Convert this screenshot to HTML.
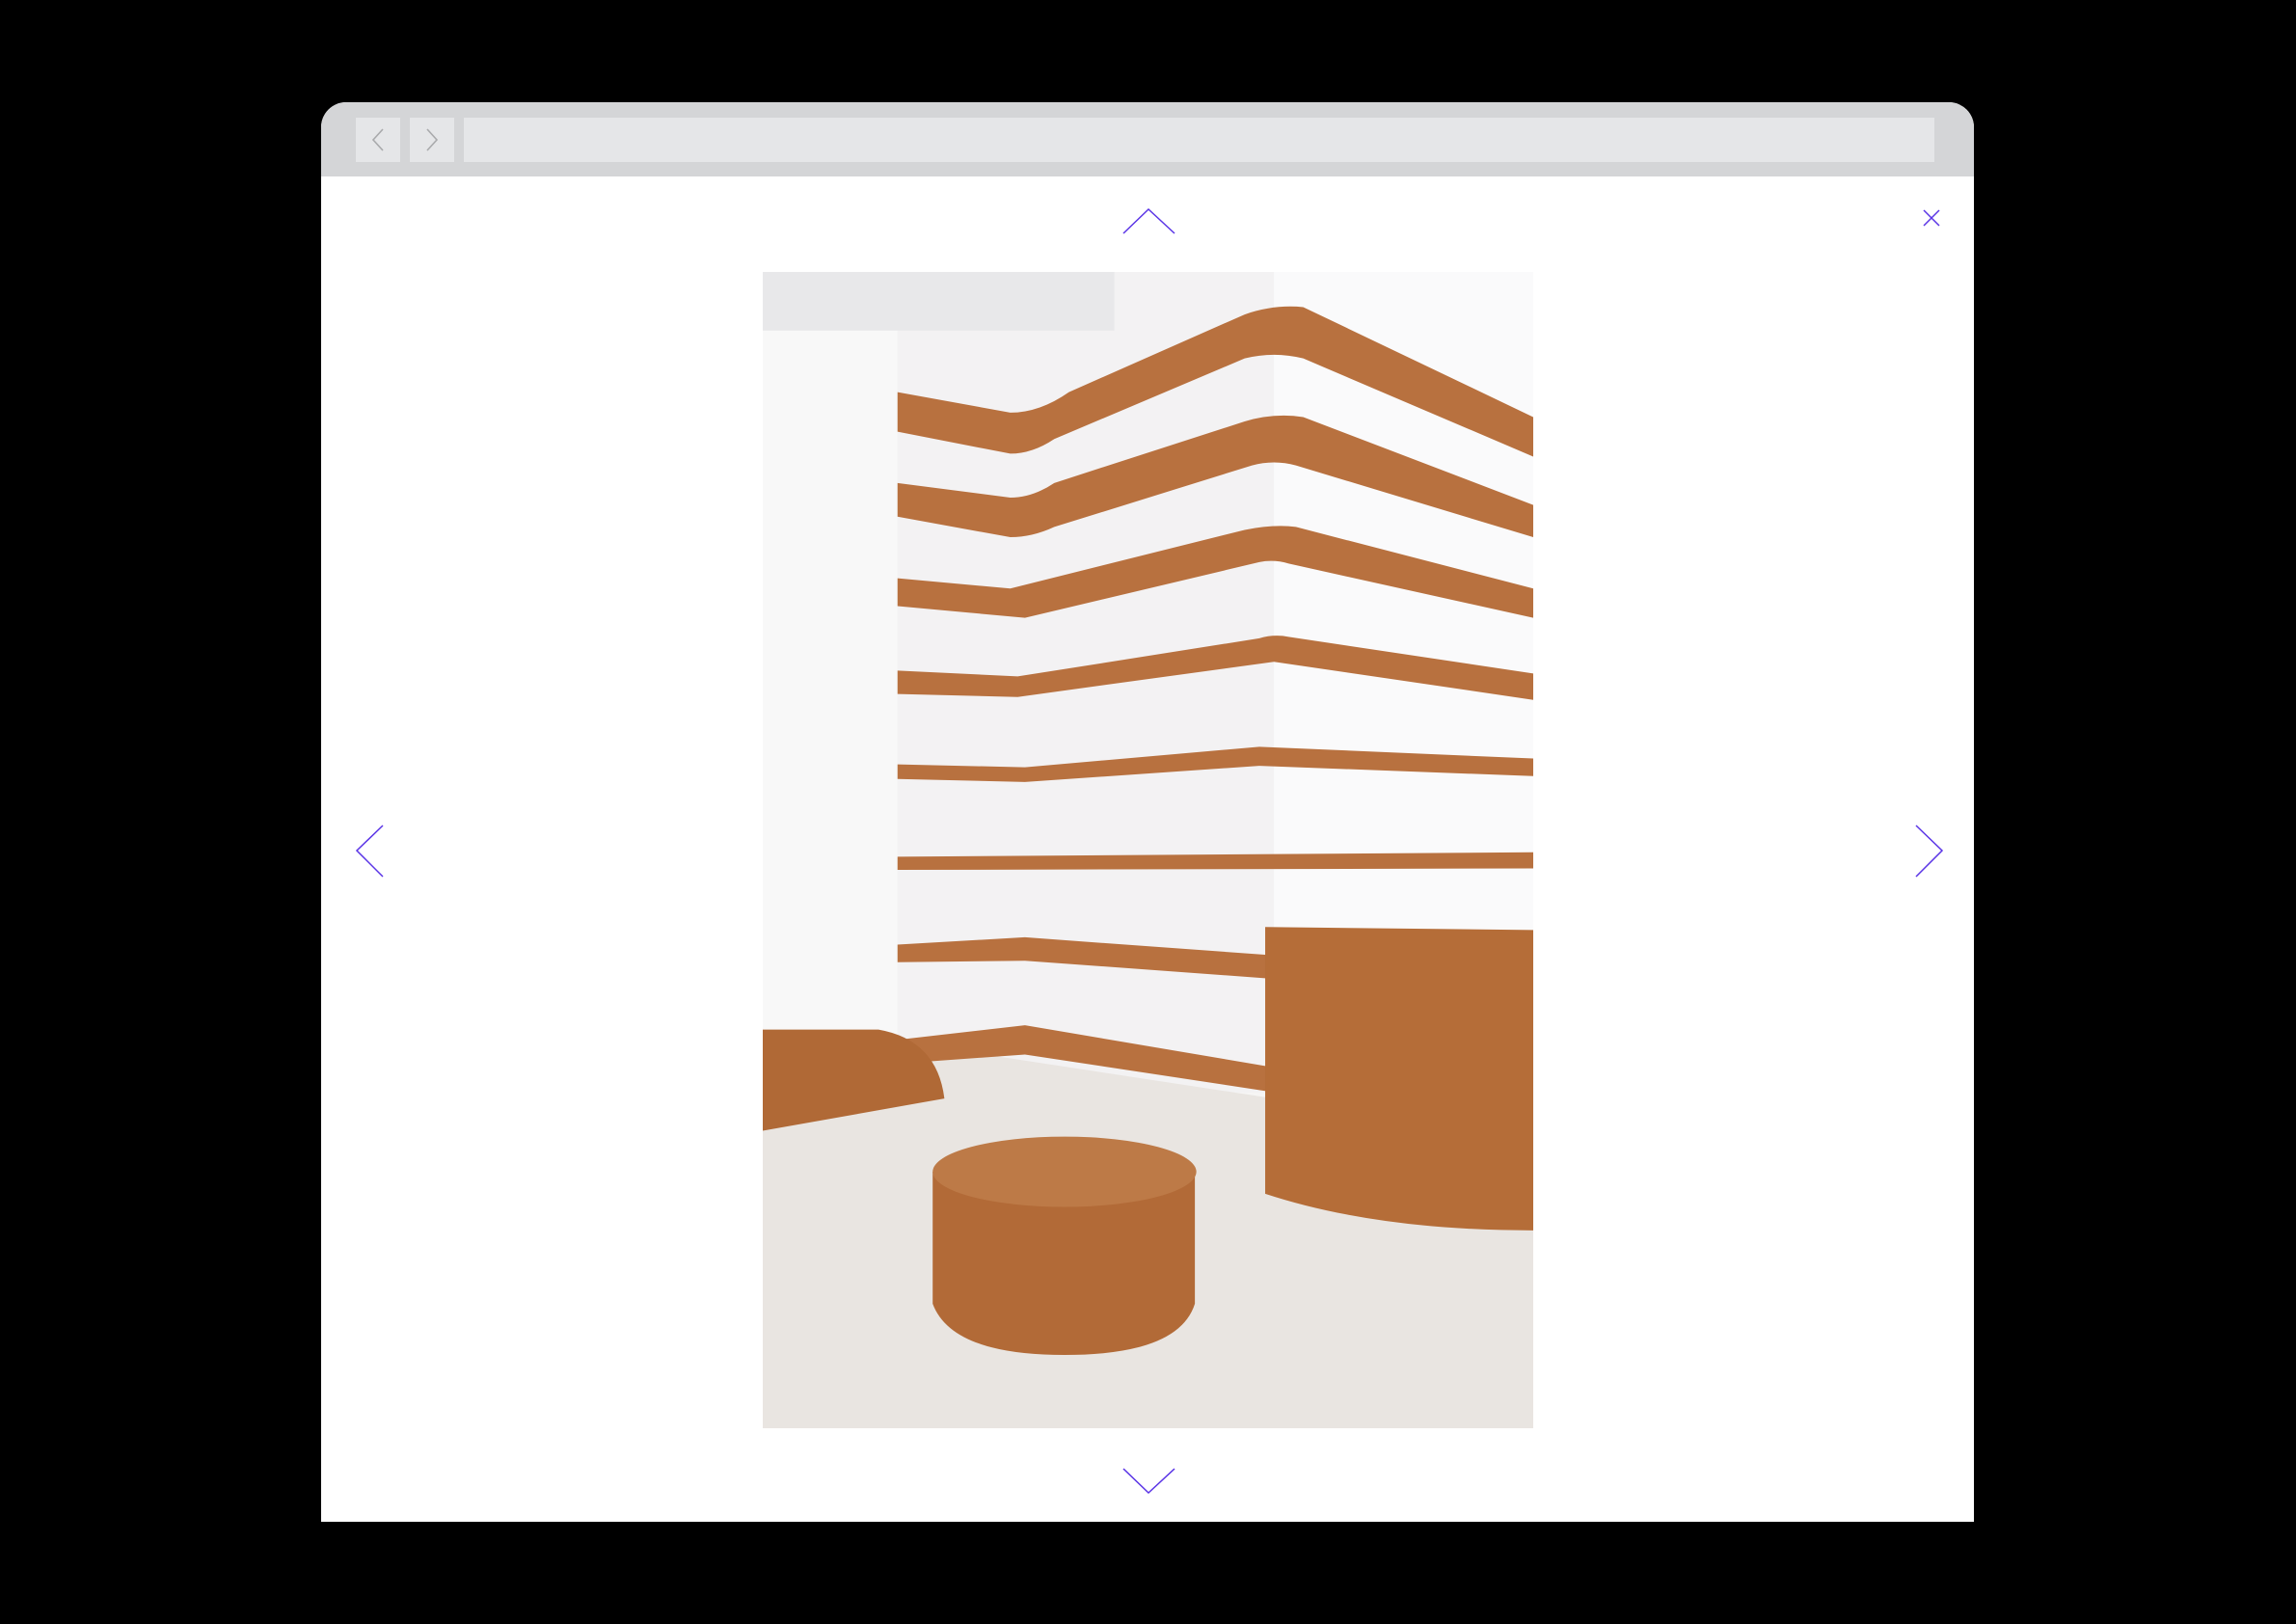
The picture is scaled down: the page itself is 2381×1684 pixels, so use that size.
<!DOCTYPE html>
<html><head><meta charset="utf-8"><style>
html,body{margin:0;padding:0;background:#000;width:2381px;height:1684px;overflow:hidden}
.win{position:absolute;left:333px;top:106px;width:1714px;height:1472px;background:#fff;border-radius:26px 26px 0 0;overflow:hidden}
.bar{position:absolute;left:0;top:0;width:100%;height:77px;background:#d4d5d7}
.btn{position:absolute;top:16px;width:46px;height:46px;background:#e5e6e8}
.url{position:absolute;left:148px;top:16px;width:1525px;height:46px;background:#e5e6e8}
svg{position:absolute}
</style></head><body>
<div class="win">
 <div class="bar">
  <div class="btn" style="left:36px"><svg width="46" height="46" style="left:0;top:0"><path d="M28 12 L18 23 L28 34" fill="none" stroke="#a9aaac" stroke-width="1.6"/></svg></div>
  <div class="btn" style="left:92px"><svg width="46" height="46" style="left:0;top:0"><path d="M18 12 L28 23 L18 34" fill="none" stroke="#a9aaac" stroke-width="1.6"/></svg></div>
  <div class="url"></div>
 </div>
</div>
<svg width="2381" height="1684" style="left:0;top:0">
 <g fill="none" stroke="#5a34e6" stroke-width="1.5">
  <path d="M1165 242 L1191 217 L1218 242"/>
  <path d="M1165 1523 L1191 1548 L1218 1523"/>
  <path d="M397 856 L370 882 L397 909"/>
  <path d="M1987 856 L2014 882 L1987 909"/>
  <path d="M1995 218 L2011 234 M2011 218 L1995 234"/>
 </g>
</svg>
<svg width="799" height="1199" viewBox="521 186 526 789" preserveAspectRatio="none" style="left:791px;top:282px">
 <rect x="521" y="186" width="526" height="789" fill="#f6f5f4"/>
 <rect x="521" y="186" width="92" height="520" fill="#f8f8f8"/>
 <rect x="613" y="186" width="434" height="560" fill="#f3f2f3"/>
 <rect x="870" y="186" width="177" height="560" fill="#fafafb"/>
 <rect x="521" y="186" width="240" height="40" fill="#e8e8ea"/>
 <polygon points="521,720 640,715 870,750 1047,760 1047,975 521,975" fill="#e9e5e1"/>
 <g fill="#b8713f">
  <path d="M613 268 L690 282 Q710 282 730 268 L850 215 Q870 208 890 210 L1047 285 L1047 312 L890 245 Q870 240 850 245 L720 300 Q705 310 690 310 L613 295Z"/>
  <path d="M613 330 L690 340 Q705 340 720 330 L850 288 Q870 282 890 285 L1047 345 L1047 367 L885 318 Q870 314 855 318 L720 360 Q705 367 690 367 L613 353Z"/>
  <path d="M613 395 L690 402 L850 362 Q870 358 885 360 L1047 402 L1047 422 L880 385 Q870 382 860 384 L700 422 L613 414Z"/>
  <path d="M613 458 L695 462 L860 436 Q870 433 880 435 L1047 460 L1047 478 L870 452 L695 476 L613 474Z"/>
  <path d="M613 522 L700 524 L860 510 L1047 518 L1047 530 L860 523 L700 534 L613 532Z"/>
  <path d="M613 585 L1047 582 L1047 593 L613 594Z"/>
  <path d="M613 645 L700 640 L865 652 L865 668 L700 656 L613 657Z"/>
  <path d="M613 710 L700 700 L865 728 L865 745 L700 720 L630 725Z"/>
 </g>
 <path d="M864 633 L1047 635 L1047 840 Q940 840 864 815Z" fill="#b56d38"/>
 <path d="M521 703 L600 703 Q640 710 645 750 L521 772Z" fill="#b06936"/>
 <path d="M637 800 L637 890 Q650 925 727 925 Q805 925 816 890 L816 800Z" fill="#b26a37"/>
 <ellipse cx="727" cy="800" rx="90" ry="24" fill="#bd7a47"/>
</svg>
</body></html>
